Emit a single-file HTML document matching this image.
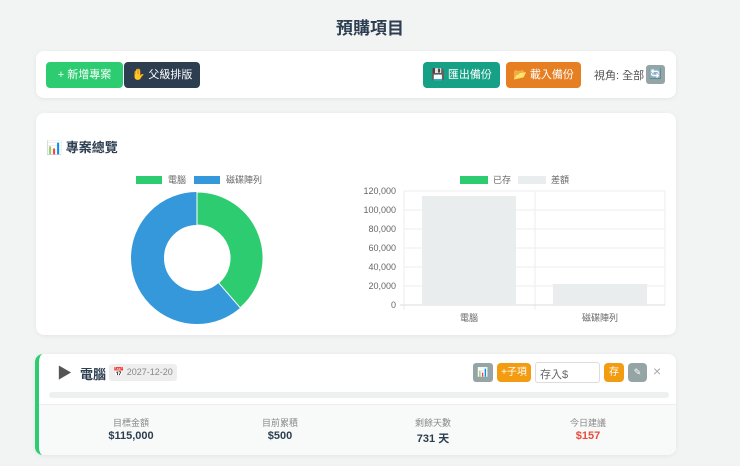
<!DOCTYPE html>
<html><head><meta charset="utf-8"><style>
*{box-sizing:border-box;margin:0;padding:0}
body{width:740px;height:466px;background:#f2f3f3;font-family:"Liberation Sans","Noto Sans CJK TC",sans-serif;position:relative;overflow:hidden;color:#2c3e50}
.card{position:absolute;background:#fff;border-radius:8px;box-shadow:0 1px 4px rgba(0,0,0,.06)}
.btn{position:absolute;height:26px;border-radius:4px;color:#fff;font-size:11px;line-height:26px;text-align:center}
.t{position:absolute;white-space:nowrap}
.c{position:absolute;width:120px;text-align:center;white-space:nowrap}
</style></head><body>
<div class="t" style="left:0;width:740px;top:14px;text-align:center;font-size:17px;font-weight:bold;color:#2c3e50">預購項目</div>
<div class="card" style="left:36px;top:51px;width:640px;height:47px">
 <div class="btn" style="left:10px;top:11px;width:77px;background:#2ecc71">+ 新增專案</div>
 <div class="btn" style="left:88px;top:11px;width:76px;background:#2c3e50">✋ 父級排版</div>
 <div class="btn" style="left:387px;top:11px;width:77px;background:#16a085">💾 匯出備份</div>
 <div class="btn" style="left:470px;top:11px;width:75px;background:#e67e22">📂 載入備份</div>
 <div class="t" style="left:558px;top:16px;font-size:11px;color:#555">視角: 全部</div>
 <div style="position:absolute;left:610px;top:14px;width:19px;height:19px;background:#95a5a6;border-radius:3px;color:#fff;font-size:10px;text-align:center;line-height:19px">🔄</div>
</div>
<div class="card" style="left:36px;top:113px;width:640px;height:222px">
 <div class="t" style="left:10px;top:24px;font-size:13px;font-weight:bold">📊 專案總覽</div>
</div>
<svg style="position:absolute;left:0;top:0" width="740" height="466">
 <rect x="136" y="176" width="26" height="8" fill="#2ecc71"/><text x="168" y="183" font-size="9" fill="#666" font-family="Liberation Sans,Noto Sans CJK TC,sans-serif">電腦</text>
 <rect x="194" y="176" width="26" height="8" fill="#3498db"/><text x="226" y="183" font-size="9" fill="#666" font-family="Liberation Sans,Noto Sans CJK TC,sans-serif">磁碟陣列</text>
 <circle cx="197" cy="258" r="49.5" fill="none" stroke="#3498db" stroke-width="33"/>
 <path d="M197 192 A66 66 0 0 1 240.3 307.8 L218.7 282.9 A33 33 0 0 0 197 225 Z" fill="#2ecc71" stroke="#fff" stroke-width="1"/>
 <line x1="197" y1="192" x2="197" y2="225" stroke="#fff"/>
 <g font-family="Liberation Sans,Noto Sans CJK TC,sans-serif" font-size="9" fill="#666">
 <rect x="460" y="176" width="28" height="8" fill="#2ecc71"/><text x="493" y="183">已存</text>
 <rect x="518" y="176" width="28" height="8" fill="#e9eded"/><text x="551" y="183">差額</text>
 <g stroke="#eee" stroke-width="1">
 <line x1="404" y1="191" x2="665" y2="191"/><line x1="404" y1="210" x2="665" y2="210"/><line x1="404" y1="229" x2="665" y2="229"/><line x1="404" y1="248" x2="665" y2="248"/><line x1="404" y1="267" x2="665" y2="267"/><line x1="404" y1="286" x2="665" y2="286"/>
 <line x1="404" y1="191" x2="404" y2="310"/><line x1="535" y1="191" x2="535" y2="310"/><line x1="665" y1="191" x2="665" y2="305"/>
 </g>
 <line x1="400" y1="305" x2="665" y2="305" stroke="#ddd"/>
 <rect x="422" y="196" width="94" height="109" fill="#e9eded"/>
 <rect x="553" y="284" width="94" height="21" fill="#e9eded"/>
 <g text-anchor="end"><text x="396" y="194">120,000</text><text x="396" y="213">100,000</text><text x="396" y="232">80,000</text><text x="396" y="251">60,000</text><text x="396" y="270">40,000</text><text x="396" y="289">20,000</text><text x="396" y="308">0</text></g>
 <text x="469" y="321" text-anchor="middle">電腦</text><text x="600" y="321" text-anchor="middle">磁碟陣列</text>
 </g>
</svg>
<div class="card" style="left:35px;top:354px;width:641px;height:101px;border-left:4px solid #2ecc71;overflow:hidden">
 <div class="t" style="left:18px;top:8px;font-size:15px;color:#555">▶</div>
 <div class="t" style="left:41px;top:10px;font-size:13px;font-weight:bold">電腦</div>
 <div class="t" style="left:70px;top:10px;height:17px;padding:0 4px;background:#eee;border-radius:3px;font-size:9px;line-height:17px;color:#888">📅 2027-12-20</div>
 <div style="position:absolute;left:434px;top:9px;width:20px;height:19px;background:#95a5a6;border-radius:3px;font-size:9px;text-align:center;line-height:19px">📊</div>
 <div class="btn" style="left:458px;top:9px;width:34px;height:19px;line-height:19px;background:#f39c12;font-size:10px">+子項</div>
 <div style="position:absolute;left:496px;top:8px;width:65px;height:21px;border:1px solid #ddd;border-radius:3px;font-size:11px;color:#666;padding:3px 4px">存入$</div>
 <div class="btn" style="left:565px;top:9px;width:20px;height:19px;line-height:19px;background:#f39c12;font-size:10px">存</div>
 <div class="btn" style="left:589px;top:9px;width:19px;height:19px;line-height:19px;background:#95a5a6;font-size:9px">✎</div>
 <div class="t" style="left:614px;top:9px;font-size:14px;color:#aaa">×</div>
 <div style="position:absolute;left:10px;top:38px;width:620px;height:6px;background:#eef0f0;border-radius:3px"></div>
 <div style="position:absolute;left:0;top:50px;width:640px;height:51px;background:#f8f9f9;border-top:1px solid #eee"></div>
 <div class="c" style="left:32px;top:62px;font-size:9px;color:#888">目標金額</div><div class="c" style="left:32px;top:76px;font-size:11px;font-weight:bold">$115,000</div>
 <div class="c" style="left:181px;top:62px;font-size:9px;color:#888">目前累積</div><div class="c" style="left:181px;top:76px;font-size:11px;font-weight:bold">$500</div>
 <div class="c" style="left:334px;top:62px;font-size:9px;color:#888">剩餘天數</div><div class="c" style="left:334px;top:76px;font-size:11px;font-weight:bold">731 天</div>
 <div class="c" style="left:489px;top:62px;font-size:9px;color:#888">今日建議</div><div class="c" style="left:489px;top:76px;font-size:11px;font-weight:bold;color:#e74c3c">$157</div>
</div>
</body></html>
